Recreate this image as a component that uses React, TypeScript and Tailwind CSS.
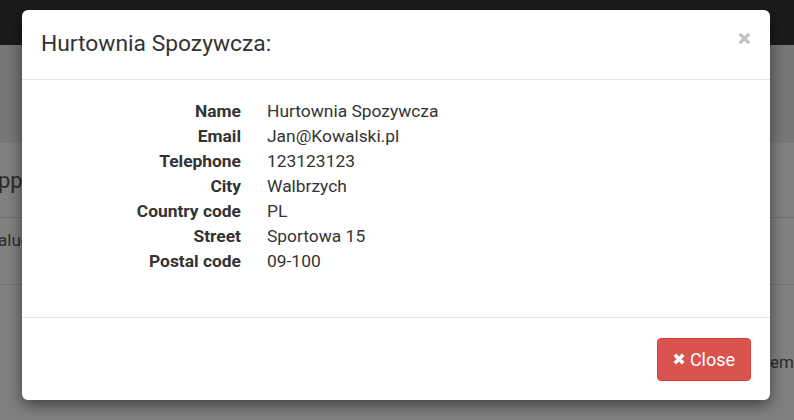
import React from "react";

const rows: [string, string][] = [
  ["Name", "Hurtownia Spozywcza"],
  ["Email", "Jan@Kowalski.pl"],
  ["Telephone", "123123123"],
  ["City", "Walbrzych"],
  ["Country code", "PL"],
  ["Street", "Sportowa 15"],
  ["Postal code", "09-100"],
];

export default function App() {
  return (
    <div
      className="relative w-[794px] h-[420px] overflow-hidden bg-[#808080] text-[#333]"
      style={{ fontFamily: "Roboto, 'Liberation Sans', sans-serif" }}
    >
      {/* background page (dimmed) */}
      <div className="h-[45px] bg-[#1b1b1b]" />
      <div className="h-[98px] bg-[#777777]" />
      <div className="flex flex-col">
        <div className="h-[75px] border-b border-[#707070] flex items-center text-[22px] text-[#2b2b2b] -ml-[2px]">
          pp
        </div>
        <div className="h-[67px] border-b border-[#707070] pt-[10px] text-[17px] text-[#2b2b2b] -ml-[2px]">
          alue
        </div>
        <div className="h-[156px] flex items-center justify-end text-[17px] text-[#2b2b2b] pr-[0px]">
          <span>em</span>
        </div>
      </div>

      {/* modal */}
      <div className="absolute left-[22px] top-[10px] w-[748px] h-[390px] bg-white rounded-[6px] shadow-[0_5px_15px_rgba(0,0,0,0.5)] flex flex-col">
        <div className="h-[70px] border-b border-[#e5e5e5] flex items-center justify-between pl-[19px] pr-[19px]">
          <div className="text-[22.8px] leading-none">Hurtownia Spozywcza:</div>
          <svg width="13" height="13" viewBox="0 0 13 13" className="-mt-[12px]">
            <path d="M1.8 1.8 L11.2 11.2 M11.2 1.8 L1.8 11.2" stroke="#c2c2c2" strokeWidth="3.2" />
          </svg>
        </div>
        <div className="h-[238px] border-b border-[#e5e5e5] pt-[19px]">
          {rows.map(([k, v]) => (
            <div key={k} className="flex h-[25px] items-center text-[17.4px]">
              <div className="w-[219px] text-right font-bold text-[#333]">{k}</div>
              <div className="ml-[26px] text-[#333]">{v}</div>
            </div>
          ))}
        </div>
        <div className="flex-1 flex items-center justify-end pr-[19px]">
          <button className="h-[43px] w-[94px] rounded-[4px] bg-[#d9534f] border border-[#d43f3a] text-white text-[18px] flex items-center justify-center gap-[5px]">
            <svg width="12" height="12" viewBox="0 0 12 12">
              <path d="M1.8 1.8 L10.2 10.2 M10.2 1.8 L1.8 10.2" stroke="#fff" strokeWidth="3.6" />
            </svg>
            <span>Close</span>
          </button>
        </div>
      </div>
    </div>
  );
}
